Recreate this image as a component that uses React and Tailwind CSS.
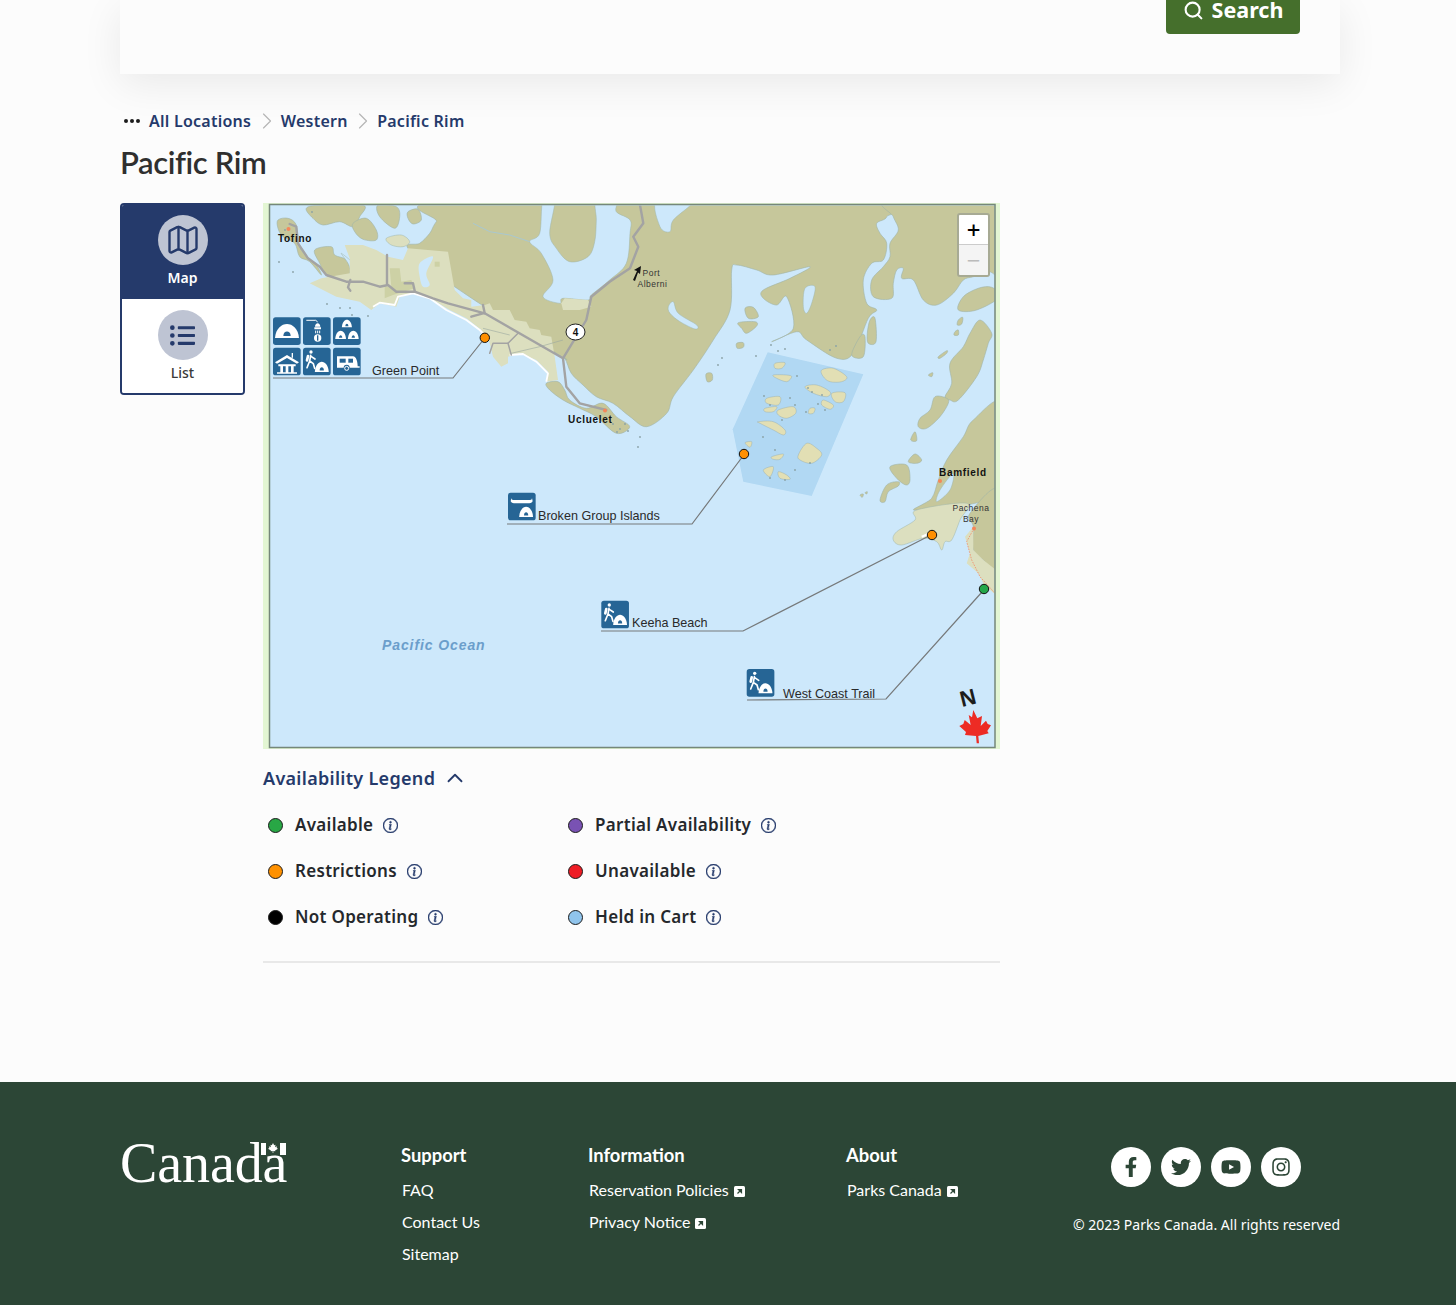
import React from "react";
import { ChevronRight, ChevronUp, Map as MapIcon, Search } from "lucide-react";
import { BsInfoCircle } from "react-icons/bs";
import { FaFacebookF, FaInstagram, FaListUl, FaTwitter, FaYoutube } from "react-icons/fa";

// map shapes are noted in the coordinates of three crops of the map
const pts = (ox, oy, s) =>
  s
    .trim()
    .split(/\s+/)
    .map((p) => {
      const [x, y] = p.split(",").map(Number);
      return `${(ox + x / 3).toFixed(1)},${(oy + y / 3).toFixed(1)}`;
    })
    .join(" ");
const a = (s) => pts(263, 200, s);
const b = (s) => pts(630, 200, s);
const c = (s) => pts(630, 470, s);

// closed catmull-rom through the points, so coasts stay where they were noted but lose their corners
const smooth = (s) => {
  const p = s
    .trim()
    .split(/\s+/)
    .map((q) => q.split(",").map(Number));
  const n = p.length;
  let d = `M${p[0][0]} ${p[0][1]}`;
  for (let i = 0; i < n; i++) {
    const p0 = p[(i - 1 + n) % n];
    const p1 = p[i];
    const p2 = p[(i + 1) % n];
    const p3 = p[(i + 2) % n];
    const c1 = [p1[0] + (p2[0] - p0[0]) / 6, p1[1] + (p2[1] - p0[1]) / 6];
    const c2 = [p2[0] - (p3[0] - p1[0]) / 6, p2[1] - (p3[1] - p1[1]) / 6];
    d += ` C${c1[0].toFixed(1)} ${c1[1].toFixed(1)} ${c2[0].toFixed(1)} ${c2[1].toFixed(1)} ${p2[0]} ${p2[1]}`;
  }
  return d + " Z";
};

const LAND = "#c6c79b";
const PARK = "#dcdfbf";
const WATER = "#cde8fb";
const COAST = "#9fb4a8";
const TILE = "#266595";

const darkLand = [
  a("130,25 175,15 300,15 290,50 270,80 230,65 180,75 150,55"),
  a("270,70 310,55 340,90 340,120 300,118 275,95"),
  a("345,15 400,20 410,50 395,85 350,50"),
  a("435,35 465,28 475,60 450,72 435,55"),
  a("45,60 75,55 100,75 105,130 130,170 160,195 175,225 140,185 110,170 95,130 60,110 45,85"),
  a("155,150 205,140 215,165 250,180 260,220 220,240 190,225 170,190"),
  a("500,100 470,130 435,145 560,250 880,460 905,475 925,520 960,555 1000,590 1050,610 1101,650") +
    " " +
    b("50,680 110,640 130,590 190,510 250,420 300,330 305,210 320,195 380,210 430,225 540,200 480,235 400,270 400,295 440,315 470,290 490,385 425,425 500,395 530,420 620,475 670,460 715,355 740,330 710,310 700,240 725,190 760,180 770,130 750,100 740,70 770,50 755,0") +
    " " +
    a("575,0 520,65"),
  b("775,0 1110,0 1110,210 1075,215 1030,230 1000,240 970,280 920,315 880,300 850,240 815,235 820,205 800,210 790,250 785,295 730,290 725,240 760,200 780,170 780,130 805,90 790,50"),
  b("985,330 1000,290 1045,265 1085,262 1110,290 1040,330"),
  b("720,360 735,355 738,425 715,430 712,400"),
  b("665,465 690,410 705,410 700,470"),
  b("345,325 370,322 385,350 355,355"),
  b("325,368 375,365 380,378 350,400 335,385"),
  b("320,430 340,428 340,442 322,445"),
  b("228,522 245,520 247,540 232,545"),
  b("1050,360 1085,400 1075,430 1060,480 1040,530 985,600 960,600 945,590 965,550 960,490 1000,440 1020,400"),
  b("865,680 870,655 900,630 915,590 950,595 955,610 930,650 890,685"),
  b("925,470 950,452 950,460 930,475"),
  b("975,395 985,390 985,405 972,405"),
  b("985,360 998,352 995,372 982,375"),
  b("895,525 908,518 905,530"),
  b("842,720 855,695 860,722"),
  b("835,785 855,762 875,780 860,790"),
  b("780,800 830,795 840,840") + " " + c("828,45 800,25"),
  c("750,90 770,45 805,35 805,48 775,65 765,95"),
  c("690,75 700,72 697,82"),
  c("705,68 712,65 710,72"),
  b("1120,610 1030,660 1000,710 950,780 925,840") + " " + c("905,85 860,120 1120,60"),
  c("1020,130 1110,60 1110,310 1060,270 1030,240 1030,170"),
  a("850,550 885,545 905,570 920,600 970,625 1020,610 1060,650 1100,680 1060,700 1000,650 950,625 900,600 860,570"),
];

const inlandWater = [
  a("840,0 875,0 860,100 880,145 920,185 975,170 995,125 1000,60 1000,0 1060,0 1060,35 1101,60 1101,100 1090,190 1040,240 985,285 975,300 900,295 890,310 840,290 870,240 835,160 800,125 830,100"),
  b("80,0 190,0 130,60 120,95 90,80"),
  b("115,320 130,305 145,340 200,375 195,387 150,365 120,340"),
  b("525,265 555,260 545,310 530,340 520,320"),
  a("235,160 280,200 270,225 255,190"),
  c("930,60 970,10 960,60 920,95"),
];

const boxIslands = [
  "575,510 610,505 650,530 635,545 600,545 580,530",
  "525,560 560,555 600,575 590,590 550,580",
  "605,580 645,578 640,605 615,605",
  "410,595 450,590 445,615 410,610",
  "405,625 440,620 430,635 405,635",
  "445,630 490,620 497,640 470,655 445,645",
  "430,525 470,525 485,530 470,545 440,535",
  "435,490 465,488 455,505 435,505",
  "385,665 430,665 465,690 460,705 430,690 390,670",
  "505,765 530,730 560,745 575,765 545,790 510,780",
  "425,770 460,762 450,778 430,778",
  "400,810 430,800 420,830",
  "445,815 470,825 480,838 450,835",
  "580,600 610,615 600,628 575,615",
  "540,625 555,625 550,640 535,640",
  "345,728 365,725 360,742",
];

const rocks = [
  [300, 200], [312, 212], [285, 230], [279, 262], [293, 272], [327, 304], [340, 308], [352, 315], [350, 308], [368, 316],
  [613, 424], [620, 429], [625, 424], [628, 431], [617, 432], [640, 437], [638, 447],
  [771, 345], [778, 351], [785, 349], [756, 356], [722, 358], [718, 365], [764, 396], [797, 376], [818, 404], [825, 410],
  [763, 437], [775, 450], [810, 463], [795, 470], [785, 480], [770, 478], [830, 350], [836, 346],
  [808, 388], [812, 392], [822, 395], [790, 398], [795, 405], [770, 405], [806, 412], [782, 420],
];

const Tile = ({ x, y, children }) => (
  <g transform={`translate(${x} ${y}) scale(0.3333)`}>
    <rect width="83" height="83" rx="8" fill={TILE} />
    {children}
  </g>
);

const Tent = ({ x = 0, y = 0, s = 1, sy = 1 }) => (
  <g transform={`translate(${x} ${y}) scale(${s} ${sy})`}>
    <path d="M6 62 C8 34 26 20 42 20 C58 20 76 34 78 62 Z" fill="#fff" />
    <path d="M31 56 C31 38 53 38 53 56 Z" fill={TILE} />
  </g>
);

const Hiker = () => (
  <g fill="none" stroke="#fff" strokeWidth="5" strokeLinecap="round" strokeLinejoin="round">
    <circle cx="24" cy="13" r="5" fill="#fff" stroke="none" />
    <path d="M23 23 L20 40 L12 60 M20 40 L31 48 L35 62 M24 26 L36 34" />
    <path d="M15 25 L12 38" strokeWidth="8" />
  </g>
);

const HikerTile = ({ x, y }) => (
  <Tile x={x} y={y}>
    <Hiker />
    <Tent x="32" y="28" s="0.58" sy="0.72" />
  </Tile>
);

const MapPicture = () => (
  <svg viewBox="263 203 737 546" className="block h-full w-full">
    <defs>
      <filter id="soft" x="-2%" y="-2%" width="104%" height="104%">
        <feGaussianBlur stdDeviation="0.3" />
      </filter>
    </defs>
    <rect x="263" y="203" width="737" height="546" fill="#e3f6d3" />
    <rect x="269.5" y="204.5" width="725.5" height="543" fill={WATER} />
    <svg x="270" y="205.5" width="724.5" height="541.5" viewBox="270 205.5 724.5 541.5">
      <g filter="url(#soft)">
        {darkLand.map((p, i) => (
          <path key={i} d={smooth(p)} fill={LAND} stroke={COAST} strokeWidth="0.6" />
        ))}
        {inlandWater.map((p, i) => (
          <path key={i} d={smooth(p)} fill={WATER} stroke={COAST} strokeWidth="0.5" />
        ))}
        <polyline points={a("630,70 680,95 740,105 800,125")} fill="none" stroke="#a9c8d0" strokeWidth="1" />

        {/* park lands */}
        <polygon
          points={a("245,135 300,135 340,150 375,170 420,180 435,145 555,155 575,270 600,295 625,300 625,320 665,315 680,310 690,330 740,330 755,360 790,365 800,385 830,390 835,405 865,410 870,440 875,470 885,540 850,545 855,515 820,480 770,460 735,470 735,490 715,500 690,470 680,430 655,390 610,355 560,330 500,295 450,280 410,290 400,320 350,310 325,330 290,305 220,290 140,250 175,235 260,220 260,175")}
          fill={PARK}
        />
        <path d={smooth(a("370,115 415,105 440,125 420,140 385,135"))} fill={PARK} stroke={COAST} strokeWidth="0.5" />
        <polygon points={a("895,310 905,295 975,300 985,320 950,330 900,330")} fill={PARK} />
        <polygon points={a("380,205 410,205 415,245 445,240 455,265 390,285 365,295 365,260 385,260")} fill="#cdd1a5" />
        <polygon points={a("515,185 530,185 530,200 515,200")} fill="#cdd1a5" />
        <path d={smooth(a("470,190 510,170 490,220 500,255 480,260 470,230"))} fill={WATER} />
        <path d={smooth(c("860,120 855,150 800,185 790,210 815,225 880,205 920,215 935,240 945,215 965,210 990,150 1010,100"))} fill={PARK} stroke={COAST} strokeWidth="0.5" />
        <polygon points={c("1030,170 1005,200 1020,250 1010,280 1045,310 1062,345 1110,385 1110,310 1060,270 1030,240")} fill={PARK} />

        {/* beaches */}
        <polyline points={a("330,320 350,308 395,315 405,290 450,280 500,295 550,330 610,360 650,390 680,420")} fill="none" stroke="#fff" strokeWidth="1.8" strokeLinejoin="round" />
        <polyline points={a("740,465 780,462 820,485 855,520 850,545")} fill="none" stroke="#fff" strokeWidth="1.8" strokeLinejoin="round" />
        <polyline points={c("875,200 900,190")} fill="none" stroke="#fff" strokeWidth="2" />

        {/* broken group */}
        <polygon points={b("413,457 700,523") + " " + c("545,78 340,35") + " " + b("308,688")} fill="#b1d8f3" />
        {boxIslands.map((p, i) => (
          <path key={i} d={smooth(b(p))} fill="#e2dfb4" stroke="#8fa7a8" strokeWidth="0.4" />
        ))}
        {rocks.map(([x, y], i) => (
          <circle key={i} cx={x} cy={y} r="0.9" fill="#8aa2a6" />
        ))}

        {/* roads */}
        <g fill="none" stroke="#a3a3a3" strokeWidth="2.4" strokeLinejoin="round" strokeLinecap="round">
          <polyline points={a("80,72 100,80 105,130 135,175 170,200 190,225 250,245 300,245 350,260 375,255 400,275 455,275 510,295 555,310 665,340 900,475 910,560 950,610 1030,630")} />
          <polyline points={a("372,165 372,250")} />
          <polyline points={a("262,240 255,262 262,272")} />
          <polyline points={a("660,315 665,340")} />
          <polyline points={a("625,350 660,340")} />
          <polyline points={a("425,250 450,250 455,272")} />
          <polyline points={a("900,475 970,360 985,290 1040,245 1101,205") + " " + b("25,140 10,110 40,70 30,15")} />
          <polyline points={a("765,400 735,430 690,430 680,460")} strokeWidth="1.5" />
          <polyline points={a("735,430 745,465")} strokeWidth="1.5" />
        </g>
        <polyline points={a("745,460 830,440 900,420")} fill="none" stroke="#9aa7a0" strokeWidth="0.6" />
        <polyline points={a("660,385 740,405")} fill="none" stroke="#9aa7a0" strokeWidth="0.6" />
        <polyline points={c("1032,175 1010,215 1025,270 1050,320 1095,370")} fill="none" stroke="#f08a68" strokeWidth="0.8" strokeDasharray="1.6 1.2" />

        <circle cx="288.5" cy="229" r="2" fill="#f5875a" />
        <circle cx="605" cy="410.5" r="2" fill="#f5875a" />
        <circle cx="940" cy="481" r="2" fill="#f5875a" />
        <circle cx="974" cy="528.5" r="2" fill="#f5875a" />
      </g>
    </svg>
    <rect x="269.5" y="204.5" width="725.5" height="543" fill="none" stroke="#75877a" strokeWidth="1.5" />

    {/* leader lines */}
    <g fill="none" stroke="#76797a" strokeWidth="1.2">
      <polyline points="273,378 453,378 484,339" />
      <polyline points="507,524 692,524 743,456" />
      <polyline points="601,631 743,631 927,537" />
      <polyline points="747,700 886,699 982,592" />
    </g>

    {/* route marker */}
    <ellipse cx="575.5" cy="332" rx="9.5" ry="8" fill="#fff" stroke="#222" strokeWidth="1" />
    <text x="575.5" y="336" textAnchor="middle" fontFamily="Liberation Sans" fontWeight="700" fontSize="10" fill="#111">4</text>
    <path d="M633 280 L637 271 L634 270 L641 266 L640 274 L638 272.5 L635 281 Z" fill="#111" />

    <g fontFamily="Liberation Sans" fill="#222">
      <g fontWeight="700" fontSize="10" letterSpacing="0.7" fill="#111">
        <text x="278" y="242">Tofino</text>
        <text x="568" y="422.5">Ucluelet</text>
        <text x="939" y="475.5">Bamfield</text>
      </g>
      <g fontSize="8.5" letterSpacing="0.5" fill="#333">
        <text x="642.5" y="276">Port</text>
        <text x="637.5" y="287">Alberni</text>
        <text x="971" y="511" textAnchor="middle">Pachena</text>
        <text x="971" y="522" textAnchor="middle">Bay</text>
      </g>
      <g fontSize="12.6" fill="#2a2a2a">
        <text x="372" y="375">Green Point</text>
        <text x="538" y="520">Broken Group Islands</text>
        <text x="632" y="627">Keeha Beach</text>
        <text x="783" y="698">West Coast Trail</text>
      </g>
      <text x="382" y="650" fontWeight="700" fontStyle="italic" fontSize="14" letterSpacing="0.9" fill="#6b9ecb">Pacific Ocean</text>
      <text x="0" y="0" transform="translate(962 707) rotate(-14)" fontWeight="700" fontSize="22" fill="#1d1d1b">N</text>
    </g>

    <polygon
      points={c("1030,720 1042,745 1056,738 1052,768 1068,752 1073,762 1083,766 1072,783 1076,790 1045,798 1047,820 1040,820 1038,798 1005,795 1008,786 988,768 1000,762 1004,750 1022,765 1016,735 1026,742")}
      fill="#ed2b24"
    />

    {/* activity icons */}
    <Tile x="273" y="317.3"><Tent /></Tile>
    <Tile x="303" y="317.3">
      <path d="M10 9 H38 L44 14" fill="none" stroke="#fff" strokeWidth="3" />
      <path d="M36 28 C36 14 52 14 52 28 Z M34 30 H54 V36 H34 Z" fill="#fff" />
      <path d="M38 40 V48 M44 40 V48 M50 40 V48" stroke="#fff" strokeWidth="3" />
      <circle cx="44" cy="62" r="11" fill="#fff" />
      <rect x="42" y="54" width="4" height="16" fill={TILE} />
    </Tile>
    <Tile x="333" y="317.3">
      <Tent x="24" y="-4" s="0.42" sy="0.55" />
      <Tent x="4" y="28" s="0.45" sy="0.6" />
      <Tent x="42" y="28" s="0.45" sy="0.6" />
    </Tile>
    <Tile x="273" y="347.7">
      <path d="M6 44 L42 22 L78 44 L72 48 L42 31 L12 48 Z M56 16 H60 V30 H56 Z" fill="#fff" />
      <path d="M16 50 H68 V56 H62 V74 H54 V56 H46 V74 H38 V56 H30 V74 H22 V56 H16 Z M12 74 H72 V78 H12 Z" fill="#fff" />
    </Tile>
    <HikerTile x="303" y="347.7" />
    <Tile x="333" y="347.7">
      <path d="M12 26 H60 C70 26 74 44 74 56 H80 V60 H50 A9 9 0 0 0 32 60 H12 Z" fill="#fff" />
      <rect x="20" y="33" width="18" height="12" fill={TILE} />
      <rect x="46" y="33" width="14" height="12" fill={TILE} />
      <circle cx="41" cy="62" r="6" fill="none" stroke="#fff" strokeWidth="3" />
    </Tile>
    <Tile x="508" y="492.7">
      <path d="M10 16 C10 22 14 22 20 22 H62 C68 22 72 22 72 16 L74 26 C70 32 66 32 60 32 H22 C16 32 12 32 8 26 Z" fill="#fff" />
      <Tent x="30" y="28" s="0.58" sy="0.72" />
    </Tile>
    <HikerTile x="601.3" y="600.7" />
    <HikerTile x="746.7" y="669" />

    {/* site markers */}
    <g stroke="#111" strokeWidth="1">
      <circle cx="484.8" cy="337.8" r="4.7" fill="#ff8f00" />
      <circle cx="744" cy="454" r="4.7" fill="#ff8f00" />
      <circle cx="932" cy="535" r="4.7" fill="#ff8f00" />
      <circle cx="984" cy="589" r="4.7" fill="#23a74a" />
    </g>
  </svg>
);

const legend = [
  ["Available", "bg-[#28a745]"],
  ["Partial Availability", "bg-[#7952b3]"],
  ["Restrictions", "bg-[#ff9100]"],
  ["Unavailable", "bg-[#ee1c25]"],
  ["Not Operating", "bg-black"],
  ["Held in Cart", "bg-[#90c4ec]"],
];

const ExternalMark = () => (
  <svg width="11" height="11" viewBox="0 0 11 11" className="ml-[5px] inline-block align-[-1px]">
    <rect width="11" height="11" rx="1.5" fill="#fff" />
    <path d="M3.5 7.5 L6.5 4.5 M4.5 3.5 H7.5 V6.5 Z" stroke="#2c4636" strokeWidth="1.2" fill="#2c4636" />
  </svg>
);

const FooterColumn = ({ title, links, className }) => (
  <div className={className}>
    <h2 className="h-[24px] text-[18.4px] leading-[24px] font-bold text-white">{title}</h2>
    <ul className="mt-[7px] pl-px text-[16px] text-white">
      {links.map(([label, external]) => (
        <li key={label} className="h-[32px] leading-[32px]">
          {label}
          {external && <ExternalMark />}
        </li>
      ))}
    </ul>
  </div>
);

const socials = [FaFacebookF, FaTwitter, FaYoutube, FaInstagram];

const App = () => {
  return (
    <div className="min-h-[1305px] overflow-hidden bg-[#fcfcfc] font-['Noto_Sans',sans-serif]">
      <div className="ml-[120px] w-[1220px]">
        <div className="flex h-[74px] items-end justify-end bg-[#fcfcfc] pr-[40px] pb-[40px] shadow-[0_10px_40px_rgba(0,0,0,0.08)]">
          <button className="flex h-[48px] w-[134px] shrink-0 items-center justify-center gap-[8px] rounded-b-[4px] bg-[#456f2c] text-[21.5px] font-bold text-white">
            <Search size={21} strokeWidth={2.4} />
            Search
          </button>
        </div>

        <nav className="mt-[35px] flex h-[24px] items-center text-[16px] font-semibold tracking-[0.25px] text-[#253a6b]">
          <span className="ml-[4px] flex w-[16px] justify-between">
            <i className="block size-[4px] rounded-full bg-[#1c1c1c]" />
            <i className="block size-[4px] rounded-full bg-[#1c1c1c]" />
            <i className="block size-[4px] rounded-full bg-[#1c1c1c]" />
          </span>
          <span className="ml-[9px]">All Locations</span>
          <ChevronRight size={28} strokeWidth={1} className="ml-[1.5px] text-[#b5b5b5]" />
          <span>Western</span>
          <ChevronRight size={28} strokeWidth={1} className="ml-[1.5px] text-[#b5b5b5]" />
          <span>Pacific Rim</span>
        </nav>

        <h1 className="mt-[9px] h-[44px] font-['Lato',sans-serif] text-[31px] leading-[40px] font-semibold tracking-[-0.4px] text-[#2f2f2f]">Pacific Rim</h1>

        <div className="mt-[17px] flex items-start gap-[18px]">
          <div className="w-[125px] shrink-0 overflow-hidden rounded-[4px] border-2 border-[#253a6b]">
            <div className="flex h-[94px] flex-col items-center bg-[#253a6b] pt-[10px]">
              <span className="flex size-[50px] items-center justify-center rounded-full bg-[#bec4d3] text-[#253a6b]">
                <MapIcon size={36} strokeWidth={1.6} />
              </span>
              <span className="mt-[3px] text-[14px] leading-[20px] font-semibold text-white">Map</span>
            </div>
            <div className="flex h-[94px] flex-col items-center bg-white pt-[11px]">
              <span className="flex size-[50px] items-center justify-center rounded-full bg-[#bec4d3] text-[#253a6b]">
                <FaListUl size={25} />
              </span>
              <span className="mt-[3px] text-[14px] leading-[20px] font-medium text-[#3a3a3a]">List</span>
            </div>
          </div>

          <div>
            <div className="relative h-[546px] w-[737px]">
              <MapPicture />
              <div className="absolute top-[10px] left-[694px] w-[33px] overflow-hidden rounded-[3px] border-2 border-[#a7aa94]">
                <div className="flex h-[30px] items-center justify-center border-b border-[#ccc] bg-white text-[24px] leading-none font-medium text-black">+</div>
                <div className="flex h-[30px] items-center justify-center bg-[#f4f4f4] text-[24px] leading-none text-[#bbb]">−</div>
              </div>
            </div>

            <div className="mt-[17px] flex h-[24px] items-center gap-[7px] text-[18px] font-semibold tracking-[0.3px] text-[#253a6b]">
              Availability Legend
              <ChevronUp size={26} strokeWidth={1.7} />
            </div>

            <div className="mt-[12px] ml-[5px] grid grid-cols-[300px_300px]">
              {legend.map(([label, dot]) => (
                <div key={label} className="flex h-[46px] items-center text-[17px] font-semibold tracking-[0.3px] text-[#25282c]">
                  <span className={`size-[15px] rounded-full border border-[#1c1c1c] ${dot}`} />
                  <span className="ml-[12px]">{label}</span>
                  <BsInfoCircle size={15} className="ml-[10px] stroke-[0.5px] text-[#253a6b]" />
                </div>
              ))}
            </div>

            <hr className="mt-[21px] border-0 border-t-2 border-[#e8e8e8]" />
          </div>
        </div>
      </div>

      <footer className="mt-[119px] h-[223px] bg-[#2c4636] pt-[61px] font-['Lato',sans-serif]">
        <div className="ml-[120px] flex w-[1220px]">
          <div className="w-[281px] shrink-0">
            <div className="relative w-[168px]">
              <span className="block h-[40px] font-['Liberation_Serif',serif] text-[56px] leading-[40px] tracking-[-0.1px] text-white">Canada</span>
              <span className="absolute top-0 left-[141px] flex h-[12px] w-[25px] justify-between">
                <i className="block h-full w-[5px] bg-white" />
                <svg viewBox="0 0 12 12" className="h-[10px] w-[10px] fill-white">
                  <path d="M6 0 L7.4 2.6 L9 2 L8.6 5 L11 4 L10.4 6 L12 7 L8.5 9 L8.8 10 L6.4 9.6 V12 H5.6 V9.6 L3.2 10 L3.5 9 L0 7 L1.6 6 L1 4 L3.4 5 L3 2 L4.6 2.6 Z" />
                </svg>
                <i className="block h-full w-[6px] bg-white" />
              </span>
            </div>
          </div>
          <FooterColumn className="w-[187px] shrink-0" title="Support" links={[["FAQ"], ["Contact Us"], ["Sitemap"]]} />
          <FooterColumn className="w-[258px] shrink-0" title="Information" links={[["Reservation Policies", true], ["Privacy Notice", true]]} />
          <FooterColumn className="w-[227px] shrink-0" title="About" links={[["Parks Canada", true]]} />
          <div className="flex w-[267px] shrink-0 flex-col items-center font-['Noto_Sans',sans-serif]">
            <div className="mt-[4px] mr-[1px] flex gap-[10px]">
              {socials.map((Icon, i) => (
                <span key={i} className="flex size-[40px] items-center justify-center rounded-full bg-white text-[#2c4636]">
                  <Icon size={20} />
                </span>
              ))}
            </div>
            <p className="mt-[28px] text-[14px] leading-[20px] whitespace-nowrap text-white">© 2023 Parks Canada. All rights reserved</p>
          </div>
        </div>
      </footer>
    </div>
  );
};

export default App;
